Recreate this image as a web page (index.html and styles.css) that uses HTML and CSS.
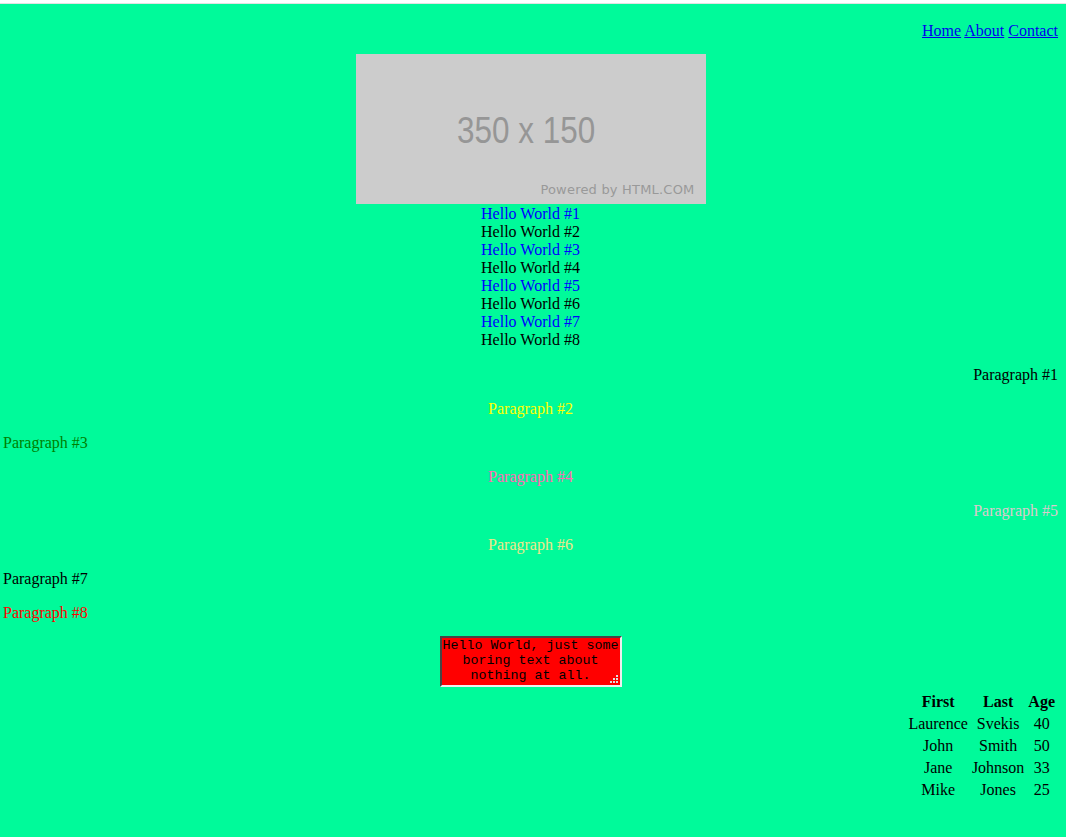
FILE: index.html
```html
<!DOCTYPE html>
<html>
<head>
<meta charset="utf-8">
<title>Page</title>
<link rel="stylesheet" href="styles.css">
</head>
<body>
<p class="nav"><a href="#">Home</a> <a href="#">About</a> <a href="#">Contact</a></p>
<div class="placeholder">
  <span class="ph-size">350 x 150</span>
  <span class="ph-powered">Powered by HTML.COM</span>
</div>
<div class="hello">
  <div class="blue">Hello World #1</div>
  <div>Hello World #2</div>
  <div class="blue">Hello World #3</div>
  <div>Hello World #4</div>
  <div class="blue">Hello World #5</div>
  <div>Hello World #6</div>
  <div class="blue">Hello World #7</div>
  <div>Hello World #8</div>
</div>
<p class="p1">Paragraph #1</p>
<p class="p2">Paragraph #2</p>
<p class="p3">Paragraph #3</p>
<p class="p4">Paragraph #4</p>
<p class="p5">Paragraph #5</p>
<p class="p6">Paragraph #6</p>
<p class="p7">Paragraph #7</p>
<p class="p8">Paragraph #8</p>
<div class="ta-wrap">
  <span class="ta-box">
    <textarea class="ta">Hello World, just some boring text about nothing at all.</textarea>
    <svg class="grip" width="8" height="8" viewBox="0 0 8 8" aria-hidden="true">
      <rect x="6" y="0" width="2" height="2" fill="#dddddd"/>
      <rect x="3" y="3" width="2" height="2" fill="#dddddd"/>
      <rect x="6" y="3" width="2" height="2" fill="#dddddd"/>
      <rect x="0" y="6" width="2" height="2" fill="#dddddd"/>
      <rect x="3" y="6" width="2" height="2" fill="#dddddd"/>
      <rect x="6" y="6" width="2" height="2" fill="#dddddd"/>
    </svg>
  </span>
</div>
<table class="people">
  <tr><th>First</th><th>Last</th><th>Age</th></tr>
  <tr><td>Laurence</td><td>Svekis</td><td>40</td></tr>
  <tr><td>John</td><td>Smith</td><td>50</td></tr>
  <tr><td>Jane</td><td>Johnson</td><td>33</td></tr>
  <tr><td>Mike</td><td>Jones</td><td>25</td></tr>
</table>
</body>
</html>
```
FILE: styles.css
```css
html {
  background: #ffffff;
}
body {
  margin: 3px 0 0;
  border-top: 1px solid #e2e2e2;
  padding: 0 8px 0 3px;
  background: #00fa9a;
  display: flow-root;
  box-sizing: border-box;
  min-height: calc(100vh - 3px);
  font-family: "Liberation Serif", "Times New Roman", serif;
  font-size: 16px;
  color: #000;
}
.nav {
  text-align: right;
  margin: 16px 0 14px;
  padding-top: 2px;
}
.nav a {
  color: #0000ee;
}
.placeholder {
  width: 350px;
  height: 150px;
  margin: 0 auto;
  background: #cccccc;
  position: relative;
  font-family: "Liberation Sans", Arial, sans-serif;
  color: #969696;
}
.ph-size {
  position: absolute;
  left: 101px;
  top: 56px;
  font-size: 37px;
  display: inline-block;
  transform: scaleX(0.85);
  transform-origin: left top;
  line-height: 42px;
}
.ph-powered {
  position: absolute;
  right: 11px;
  top: 128px;
  font-family: "DejaVu Sans", Verdana, sans-serif;
  font-size: 13px;
  letter-spacing: 0.2px;
  color: #999999;
}
.hello {
  text-align: center;
  padding-top: 1px;
}
.blue {
  color: #0000ff;
}
p {
  margin: 16px 0;
}
.p1 { text-align: right; color: #000; margin-top: 17px; }
.p2 { text-align: center; color: #ffff00; }
.p3 { text-align: left; color: #008000; }
.p4 { text-align: center; color: #ff69b4; }
.p5 { text-align: right; color: #dccacd; }
.p6 { text-align: center; color: #f0e68c; }
.p7 { text-align: left; color: #000; }
.p8 { text-align: left; color: #ff0000; margin-bottom: 14px; }
.ta-wrap {
  text-align: center;
  line-height: 0;
}
.ta-box {
  display: inline-block;
  position: relative;
}
.ta {
  display: block;
  width: 182px;
  height: 51px;
  box-sizing: border-box;
  margin: 0;
  padding: 0;
  border: 2px inset #eeeeee;
  border-top-color: #9a9a9a;
  border-left-color: #9a9a9a;
  border-right-color: #eeeeee;
  border-bottom-color: #eeeeee;
  background: #ff0000;
  color: #000;
  font-family: "Liberation Mono", "Courier New", monospace;
  font-size: 13.333px;
  line-height: 15px;
  text-align: center;
  overflow: hidden;
  resize: none;
}
.grip {
  position: absolute;
  right: 4px;
  bottom: 4px;
}
.people {
  margin: 3px 0 0 auto;
  border-spacing: 2px;
  text-align: center;
}
.people th, .people td {
  padding: 1px;
  text-align: center;
}
```
